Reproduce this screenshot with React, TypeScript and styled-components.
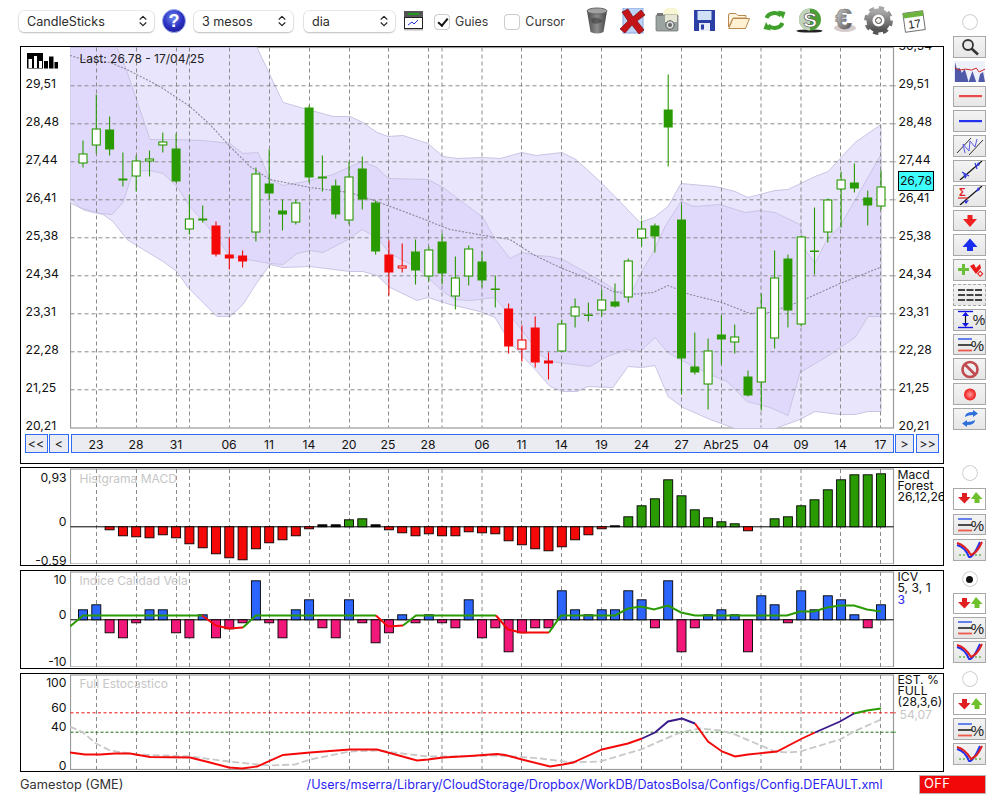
import React from 'react';
import styled, { createGlobalStyle } from 'styled-components';
import { ChevronsUpDown } from 'lucide-react';

const Global = createGlobalStyle`
  html, body { margin: 0; padding: 0; background: #fff; }
  body { font-family: Inter, "Liberation Sans", sans-serif; color: #111; }
`;

const Page = styled.div`
  width: 1000px; height: 800px; overflow: hidden; display: flex; background: #fff;
`;
const Main = styled.div`
  width: 923.5px; margin-left: 20px; display: flex; flex-direction: column;
`;
const Toolbar = styled.div`
  height: 46px; margin-left: -1px; display: flex; align-items: center; padding-bottom: 5px; box-sizing: border-box;
`;
const SelectWrap = styled.div<{ $w: number; $ml: number }>`
  position: relative; width: ${p => p.$w}px; height: 21px; margin-left: ${p => p.$ml}px; flex: none;
`;
const Select = styled.select`
  appearance: none; width: 100%; height: 100%; border: none; border-radius: 5px; background: #fff; padding: 0 0 0 8px;
  box-shadow: 0 0 0 .5px #d4d4d4, 0 1px 1.5px rgba(0,0,0,.3);
  font: 12.6px Inter, "Liberation Sans", sans-serif; color: #2c2c2c; outline: none;
`;
const SelectIcon = styled(ChevronsUpDown)`
  position: absolute; right: 4px; top: 3.5px; width: 14px; height: 14px; color: #222; pointer-events: none;
`;
const ToolIcon = styled.svg<{ $ml: number }>`
  flex: none; display: block; margin-left: ${p => p.$ml}px;
`;
const CheckLabel = styled.label<{ $ml: number; $gap: number }>`
  display: flex; align-items: center; gap: ${p => p.$gap}px; margin-left: ${p => p.$ml}px;
  font-size: 12.4px; color: #3a3a3a; padding-top: 2px;
`;
const Check = styled.input`
  appearance: none; margin: 0; width: 14px; height: 14px; border-radius: 3px; background: #fff; position: relative;
  box-shadow: 0 0 0 .75px #bcbcbc; flex: none;
  &:checked::after {
    content: ''; position: absolute; left: 4.5px; top: 1px; width: 3.5px; height: 8px;
    border: solid #111; border-width: 0 2px 2px 0; transform: rotate(40deg);
  }
`;
const Panel = styled.section<{ $h: number; $mt: number }>`
  position: relative; box-sizing: border-box; height: ${p => p.$h}px; margin-top: ${p => p.$mt}px;
  border: 1.5px solid #000; overflow: hidden; display: flex; flex-direction: column; flex: none;
`;
const ChartRow = styled.div<{ $h: number }>`
  display: grid; grid-template-columns: 48.5px 827px 1fr; height: ${p => p.$h}px; flex: none;
`;
const Axis = styled.div`
  position: relative; font-size: 12.2px; color: #111;
`;
const Tick = styled.span<{ $right?: boolean }>`
  position: absolute; transform: translateY(-50%); line-height: 14px; white-space: nowrap;
  ${p => p.$right ? 'right: 3px;' : 'left: 4.5px;'}
`;
const RightTick = styled.span`
  position: absolute; left: 2px; transform: translateY(-50%); line-height: 14px;
`;
const PriceBox = styled.span`
  position: absolute; left: 1.5px; width: 36px; height: 20px; box-sizing: border-box; border: 1.5px solid #000;
  background: #40ffff; text-align: center; line-height: 18px; transform: translateY(-50%); z-index: 2;
`;
const PlotWrap = styled.div`
  position: relative;
`;
const PlotSvg = styled.svg`
  display: block; position: relative;
`;
const BarsSvg = styled.svg`
  position: absolute; left: 5.5px; top: 5.5px;
`;
const IcoSvg = styled.svg`
  display: block;
`;
const PlotTitle = styled.div<{ $dark?: boolean }>`
  position: absolute; left: 10px; top: ${p => p.$dark ? 3.5 : 2.5}px; font-size: 12px; line-height: 15px; white-space: nowrap;
  color: ${p => p.$dark ? '#222' : '#c6c6c6'};
`;
const Legend = styled.div`
  padding: .5px 0 0 1px; font-size: 12.2px; line-height: 11px; white-space: nowrap; color: #111;
`;
const LegendBlue = styled.div`color: #2a1ef0; padding-top: 1px;`;
const LegendGray = styled.div`color: #c8c8c8; padding-top: 2px; padding-left: 2px;`;
const NavRow = styled.div`
  display: flex; height: 19.5px; margin-top: 4.5px; padding-left: 3.5px; flex: none;
`;
const NavBtn = styled.button<{ $w: number; $ml: number }>`
  width: ${p => p.$w}px; margin-left: ${p => p.$ml}px; padding: 0; flex: none; box-sizing: border-box;
  background: #ebebf2; border: 1px solid #2f6bf5; font: 12.5px Inter, "Liberation Sans", sans-serif; color: #222;
`;
const DateBar = styled.div`
  position: relative; width: 823px; margin-left: 1.5px; box-sizing: border-box; flex: none;
  background: #ebebf2; border: 1px solid #2f6bf5;
`;
const DateLabel = styled.span`
  position: absolute; top: 2px; transform: translateX(-50%); font-size: 12.2px; line-height: 15px; color: #111;
`;
const Status = styled.div`
  flex: 1; display: flex; align-items: center; font-size: 12.8px; padding-bottom: 2px; box-sizing: border-box;
`;
const Stock = styled.span`color: #333;`;
const PathLink = styled.span`
  color: #2a1ef0; margin-left: auto; margin-right: 61px; white-space: nowrap; font-size: 12.63px;
`;
const Side = styled.aside`
  width: 33px; margin-left: 9.5px; display: flex; flex-direction: column; padding-top: 15px; box-sizing: border-box; height: 800px;
`;
const SideGroup = styled.div<{ $mt: number; $gap: number }>`
  display: flex; flex-direction: column; gap: ${p => p.$gap}px; margin-top: ${p => p.$mt}px;
`;
const Radio = styled.div<{ $on?: boolean }>`
  width: 14px; height: 14px; border-radius: 50%; background: #fff; align-self: center; position: relative; margin-bottom: 4px;
  box-shadow: 0 0 0 .75px #c4c4c4, 0 .5px 1px rgba(0,0,0,.15);
  ${p => p.$on ? `&::after { content: ''; position: absolute; left: 3.5px; top: 3.5px; width: 7px; height: 7px; border-radius: 50%; background: #111; }` : ''}
`;
const SideBtn = styled.div<{ $plain?: boolean; $white?: boolean; $dashed?: boolean }>`
  width: 33px; height: 21.8px; box-sizing: border-box; flex: none; display: flex; align-items: center; justify-content: center;
  border: 1.5px ${p => p.$dashed ? 'dashed' : 'solid'} ${p => p.$plain ? 'transparent' : '#a8a8a8'};
  background: ${p => p.$white ? '#fff' : p.$plain ? '#fff' : 'linear-gradient(#f4f4f4, #e6e6e6)'};
`;
const OffBtn = styled.div`
  margin: 10.5px 0 0 -34px; width: 67px; height: 18.5px; box-sizing: border-box; flex: none;
  background: #f20808; border: 1.5px solid #b4b4b4; color: #fff; font-size: 13px; line-height: 15.5px; padding-left: 4px; letter-spacing: .3px;
`;
const SvgNote = styled.text`
  font-family: "Liberation Sans", sans-serif;
`;

const GREEN = '#2a9a02';
const RED = '#f40808';
const xAt = (i: number) => 83 + 13.3 * i;
const pts = (a: number[][]) => a.map(p => p.join(',')).join(' ');

type K = 'w' | 'g' | 'r' | 'R';
const candles: [number, number, number, number, K][] = [
  [141,168,154,164,'w'],[95,154,129,146,'w'],[117,156,130,150,'g'],[153,187,179,181,'g'],[156,192,161,177,'w'],
  [151,177,159,162,'w'],[133,153,142,146,'w'],[134,183,149,182,'g'],[195,235,219,230,'w'],[206,223,219,221,'g'],
  [222,257,226,255,'r'],[238,270,255,259,'r'],[251,268,256,262,'r'],[168,242,174,233,'w'],[150,200,184,194,'g'],
  [200,231,211,215,'g'],[200,225,203,223,'w'],[106,183,108,178,'g'],[156,192,177,179,'g'],[180,219,186,215,'g'],
  [162,225,177,221,'w'],[157,210,169,200,'g'],[201,255,203,252,'g'],[241,296,255,273,'r'],[244,273,266,269,'R'],
  [240,285,252,271,'g'],[247,282,250,277,'w'],[234,285,242,274,'g'],[257,310,278,297,'w'],[246,286,249,277,'w'],
  [252,288,262,281,'g'],[276,308,289,290,'g'],[304,354,309,347,'r'],[326,362,340,350,'R'],[317,368,328,363,'r'],
  [353,380,361,364,'r'],[320,352,324,352,'w'],[299,328,307,317,'w'],[303,322,315,316,'g'],[290,317,300,311,'w'],
  [284,308,302,307,'g'],[259,303,261,298,'w'],[221,247,229,239,'w'],[224,253,226,237,'g'],[75,167,110,128,'g'],
  [205,395,220,359,'g'],[333,375,367,373,'g'],[339,410,351,385,'w'],[316,365,335,340,'g'],[325,354,337,343,'w'],
  [371,397,377,396,'g'],[294,411,308,383,'w'],[251,349,278,339,'w'],[255,328,259,311,'g'],[236,327,237,325,'w'],
  [208,275,251,252,'g'],[199,243,200,233,'w'],[172,228,180,190,'w'],[164,193,183,189,'g'],[191,226,198,206,'g'],
  [171,210,187,207,'w'],
];
const vGrid = [96.5,136.5,176.5,189.5,229.5,269.5,309.5,349.5,388.5,428.5,442,482,521.5,561.5,601.5,641.5,681.5,721.5,761,801,840.5,880.5];
const hGrid = [86.3,124.3,162.3,200.3,238.3,276.3,314.3,352.3,390.3];

const outerTop = [[70,48],[257,48],[283,103],[333,117],[350,117],[363,123],[377,133],[388,137],[403,136],[428,144],[443,157],[457,159],[483,158],[500,159],[522,153],[536,156],[562,153],[576,160],[600,182],[615,197],[640,223],[654,218],[668,207],[681,184],[715,187],[735,192],[748,198],[775,191],[788,190],[815,177],[828,172],[855,143],[881,125]];
const outerBot = [[70,203],[85,211],[103,215],[113,222],[127,240],[163,262],[177,272],[188,288],[217,317],[230,317],[243,305],[257,283],[270,265],[283,268],[310,267],[350,272],[363,272],[377,276],[390,288],[417,301],[428,298],[450,305],[480,312],[495,318],[510,343],[537,372],[550,387],[563,392],[577,392],[588,387],[613,388],[628,367],[642,368],[655,366],[668,397],[683,408],[710,420],[735,429],[775,429],[800,420],[815,412],[840,415],[855,415],[868,412],[881,412]];
const innerTop = [[70,48],[117,48],[127,72],[150,140],[173,140],[203,141],[230,144],[243,154],[258,153],[270,180],[283,186],[305,182],[333,175],[362,162],[377,168],[388,179],[428,180],[443,188],[483,218],[495,240],[510,259],[522,253],[537,256],[550,257],[563,260],[577,268],[590,275],[607,285],[617,292],[633,290],[643,270],[653,253],[665,227],[681,202],[694,207],[720,205],[745,213],[760,211],[775,213],[800,225],[805,250],[815,264],[827,240],[840,227],[881,155]];
const innerBot = [[70,198],[80,208],[100,214],[112,215],[123,203],[133,172],[150,171],[163,174],[177,187],[190,207],[213,233],[230,257],[270,264],[283,265],[297,254],[310,251],[323,253],[348,240],[362,230],[377,238],[390,254],[417,268],[443,292],[455,300],[470,301],[495,298],[520,328],[540,355],[550,362],[590,367],[607,357],[627,350],[640,352],[655,338],[668,353],[680,360],[710,375],[727,382],[747,402],[770,408],[788,416],[800,373],[827,357],[840,348],[855,338],[868,317],[881,317]];
const sma = [[70,56],[83,60],[110,63],[127,70],[160,87],[190,107],[210,125],[230,147],[250,167],[270,180],[310,188],[350,193],[377,202],[417,217],[450,230],[490,237],[510,240],[533,255],[560,268],[590,280],[613,292],[630,295],[653,293],[668,286],[690,295],[722,303],[750,314],[770,313],[800,302],[840,284],[880,268]];

const macd = [0,0,-3,-9,-10,-11,-8,-11,-17,-21,-27,-31,-33,-22,-16,-13,-9,-2,2,2,7,8,2,-3,-6,-9,-7,-9,-9,-5,-6,-7,-14,-18,-22,-24,-20,-13,-8,-2,1,10,21,28,47,31,17,9,5,3,-4,0,8,10,21,27,37,47,52,52,53];
const icv = [10,15,-13,-18,-3,10,10,-13,-18,5,-18,-9,-3,39,-3,-18,10,20,-8,-18,20,-3,-23,-13,5,-3,5,-3,-8,20,-18,-8,-32,-13,-8,-8,29,10,5,10,10,29,20,-8,39,-32,-8,5,10,5,-32,24,15,-3,29,10,24,20,5,-8,15];

const icvLines: [string, number[][]][] = [
  [GREEN, [[70,627],[83,616],[202,616]]],
  [RED, [[202,616],[216,626],[229,629],[243,628]]],
  [GREEN, [[243,628],[256,616],[376,616]]],
  [RED, [[376,616],[388,627],[403,626]]],
  [GREEN, [[403,626],[416,616],[496,616]]],
  [RED, [[496,616],[508,630],[521,633],[549,633]]],
  [GREEN, [[549,633],[561,616],[615,616],[628,609],[641,607],[654,610],[668,606],[681,613],[695,616],[787,616],[800,612],[814,612],[827,608],[840,606],[854,606],[867,610],[881,612]]],
];
const stoLines: [string, number[][]][] = [
  [RED, [[70,753],[85,755],[100,755],[115,754],[130,754],[150,757.5],[190,758],[210,763],[229,768],[242,769],[257,767],[283,755.5],[310,753],[350,750],[377,750],[388,753],[417,761],[428,760],[443,758],[470,756.5],[497,754.5],[505,755.5],[522,760],[550,767],[563,765],[573,763],[602,750],[628,744],[642,739]]],
  ['#3a1a8a', [[642,739],[655,733],[668,722],[682,719],[695,724]]],
  [RED, [[695,724],[708,742],[722,752],[735,757],[748,755],[777,752],[802,739],[815,733]]],
  ['#3a1a8a', [[815,733],[840,722],[854,714]]],
  [GREEN, [[854,714],[867,711],[881,709]]],
];
const stoGray = [[70,727],[83,733],[96,744],[110,751],[136,755],[190,757],[229,762],[257,765],[270,766],[295,765],[310,760],[350,752],[377,751],[428,757],[443,757],[500,756],[541,759],[572,763],[600,762],[641,750],[680,733],[700,729],[720,731],[735,735],[775,752],[788,753],[800,752],[840,740],[854,732],[881,720]];

const GRID = '#8a8a8a';

const Plot: React.FC<{ y0: number; h: number; top: number; bottom: number; children?: React.ReactNode }> = ({ y0, h, top, bottom, children }) => (
  <PlotSvg width={827} height={h} viewBox={`70 ${y0} 827 ${h}`}>
    <rect x={70.5} y={top} width={823} height={bottom - top} fill="#fff" stroke="#9a9a9a" strokeWidth={1.2} />
    {vGrid.map(x => <line key={x} x1={x} x2={x} y1={top} y2={bottom} stroke={GRID} strokeDasharray="4 3" strokeWidth={1} />)}
    {children}
  </PlotSvg>
);

const Candle: React.FC<{ i: number; c: [number, number, number, number, K] }> = ({ i, c }) => {
  const [wt, wb, bt, bb, k] = c;
  const x = xAt(i);
  const col = k === 'r' || k === 'R' ? RED : GREEN;
  const fill = k === 'w' || k === 'R' ? '#fff' : col;
  return (
    <g>
      <line x1={x} x2={x} y1={wt} y2={wb} stroke={col} strokeWidth={1.1} />
      {k === 'w' || k === 'R'
        ? <rect x={x - 4} y={bt + .5} width={8} height={Math.max(bb - bt - 1, 1)} fill={fill} stroke={col} strokeWidth={1.1} />
        : <rect x={x - 4.5} y={bt} width={9} height={Math.max(bb - bt, 1.5)} fill={fill} />}
    </g>
  );
};

const MainPlot = () => (
  <PlotSvg width={827} height={382} viewBox="70 47.5 827 382">
    <rect x={70.5} y={48} width={823} height={380.5} fill="#fff" stroke="#9a9a9a" strokeWidth={1.2} />
    <polygon points={pts([...outerTop, ...[...outerBot].reverse()])} fill="#e9e5fc" stroke="#c9c5e4" strokeWidth={1} />
    <polygon points={pts([...innerTop, ...[...innerBot].reverse()])} fill="#e1d9fb" stroke="#c9c5e4" strokeWidth={1} />
    {hGrid.map(y => <line key={y} x1={70.5} x2={893.5} y1={y} y2={y} stroke={GRID} strokeDasharray="4 3" strokeWidth={1} />)}
    {vGrid.map(x => <line key={x} x1={x} x2={x} y1={48} y2={428} stroke={GRID} strokeDasharray="4 3" strokeWidth={1} />)}
    <polyline points={pts(sma)} fill="none" stroke="#8a8598" strokeWidth={1.1} strokeDasharray="2 1.5" />
    {candles.map((c, i) => <Candle key={i} i={i} c={c} />)}
    {hGrid.map(y => <line key={y} x1={893.5} x2={896} y1={y} y2={y} stroke="#999" strokeWidth={.8} />)}
  </PlotSvg>
);

const BarsIcon = () => (
  <BarsSvg width={32} height={16} viewBox="0 0 32 16">
    <rect x={0} y={0} width={16} height={15.5} fill="#000" />
    <rect x={1.5} y={6} width={3.5} height={9} fill="#fff" />
    <rect x={7} y={3} width={3} height={12} fill="#fff" />
    <rect x={12} y={8} width={3} height={7} fill="#fff" />
    <rect x={17} y={8} width={4} height={7.5} fill="#000" />
    <rect x={22} y={3.5} width={4.5} height={12} fill="#000" />
    <rect x={27.5} y={9} width={3.5} height={6.5} fill="#000" />
  </BarsSvg>
);

const HelpIcon = () => (
  <ToolIcon $ml={8} width={24} height={24} viewBox="0 0 24 24">
    <defs><radialGradient id="hg" cx=".45" cy=".35" r=".7"><stop offset="0" stopColor="#6f8df0" /><stop offset=".6" stopColor="#2a2fc0" /><stop offset="1" stopColor="#1a1a90" /></radialGradient></defs>
    <circle cx={12} cy={12} r={11.5} fill="url(#hg)" stroke="#9fb0ef" strokeWidth={1} />
    <SvgNote x={12} y={18} textAnchor="middle" fontSize={18} fontWeight={700} fill="#fff">?</SvgNote>
  </ToolIcon>
);
const WindowIcon = () => (
  <ToolIcon $ml={9} width={19} height={20} viewBox="0 0 19 20">
    <rect x={0} y={0} width={19} height={6} fill="#555" />
    <rect x={4} y={2} width={11} height={2} fill="#1f9a1f" />
    <rect x={.5} y={6.5} width={18} height={11} fill="#fff" stroke="#222" />
    <polyline points="4,14 8,11 10,13 14,9" fill="none" stroke="#2233dd" strokeWidth={1} />
    <rect x={0} y={18} width={19} height={1.5} fill="#bbb" />
  </ToolIcon>
);
const TrashIcon = () => (
  <ToolIcon $ml={21} width={22} height={27} viewBox="0 0 22 27">
    <defs><linearGradient id="tg" x1="0" x2="1"><stop offset="0" stopColor="#4a4a4a" /><stop offset=".5" stopColor="#8c8c8c" /><stop offset="1" stopColor="#444" /></linearGradient></defs>
    <path d="M1 4 L4.5 25 Q11 28 17.5 25 L21 4 Z" fill="url(#tg)" />
    <path d="M5 12 Q11 8 17 14 Q12 18 6 16 Z" fill="#333" opacity={.5} />
    <ellipse cx={11} cy={4} rx={10} ry={3} fill="#a2a2a2" stroke="#666" />
  </ToolIcon>
);
const CrossIcon = () => (
  <ToolIcon $ml={12} width={26} height={26} viewBox="0 0 26 26">
    <rect x={3} y={0} width={20} height={25} fill="#bdd3f6" stroke="#8aa6dc" />
    <path d="M2 4 L8 1 L13 9 L21 2 L25 7 L17 13 L24 22 L19 26 L12 17 L5 25 L0 21 L8 13 Z" fill="#c4141a" stroke="#7a0b0e" strokeWidth={.7} />
  </ToolIcon>
);
const CameraIcon = () => (
  <ToolIcon $ml={9} width={25} height={25} viewBox="0 0 25 25">
    <circle cx={16} cy={7} r={8} fill="#f6f3c4" opacity={.75} />
    <rect x={1} y={7} width={22} height={16} rx={1} fill="#9aa3a0" stroke="#6a6a6a" strokeWidth={.7} />
    <rect x={2} y={5} width={6} height={3} fill="#777" />
    <rect x={10} y={7} width={12} height={7} fill="#eef0da" opacity={.9} />
    <circle cx={15} cy={17} r={4.2} fill="#d9dcdc" stroke="#555" />
    <circle cx={15} cy={17} r={2} fill="#666" />
  </ToolIcon>
);
const FloppyIcon = () => (
  <ToolIcon $ml={14} width={21} height={21} viewBox="0 0 21 21">
    <rect x={0} y={0} width={21} height={21} fill="#2b3fa6" />
    <rect x={3.5} y={1} width={14} height={9} fill="#cfe0f7" />
    <rect x={5} y={13} width={11} height={8} fill="#e7ecf8" />
    <rect x={7} y={14.5} width={3} height={5} fill="#2b3fa6" />
  </ToolIcon>
);
const FolderIcon = () => (
  <ToolIcon $ml={13} width={22} height={16} viewBox="0 0 22 16">
    <path d="M.5 2 Q.5 .5 2 .5 H8 L10 2.5 H18 V5 H5 L.5 14 Z" fill="#fff5de" stroke="#b98a50" />
    <path d="M.8 15.5 L5 5.5 H21.5 L17.5 15.5 Z" fill="#fff1d2" stroke="#b98a50" />
  </ToolIcon>
);
const RefreshIcon = () => (
  <ToolIcon $ml={13} width={23} height={23} viewBox="0 0 23 23">
    <path d="M3.5 9 A8.5 7 0 0 1 18 6.5" fill="none" stroke="#3fa02c" strokeWidth={4} />
    <path d="M15 1.5 L22.5 3 L20 10 Z" fill="#3fa02c" />
    <path d="M19.5 14 A8.5 7 0 0 1 5 16.5" fill="none" stroke="#3fa02c" strokeWidth={4} />
    <path d="M8 21.5 L.5 20 L3 13 Z" fill="#3fa02c" />
  </ToolIcon>
);
const CoinIcon = () => (
  <ToolIcon $ml={10} width={27} height={25} viewBox="0 0 27 25">
    <ellipse cx={13.5} cy={23} rx={13} ry={1.6} fill="#222" />
    <circle cx={14} cy={11.5} r={11} fill="#4c9f38" />
    <path d="M14 .5 A11 11 0 0 0 14 22.5 Z" fill="#d7dcd2" opacity={.85} />
    <SvgNote x={14} y={19} textAnchor="middle" fontSize={21} fontWeight={700} fill="#fff" stroke="#444" strokeWidth={.6}>S</SvgNote>
  </ToolIcon>
);
const EuroIcon = () => (
  <ToolIcon $ml={8} width={26} height={25} viewBox="0 0 26 25">
    <defs><linearGradient id="eg" x1="0" y1="0" x2="1" y2="1"><stop offset="0" stopColor="#e0e0e0" /><stop offset=".55" stopColor="#8a8a8a" /><stop offset="1" stopColor="#4a3f3a" /></linearGradient></defs>
    <ellipse cx={14} cy={20} rx={11} ry={4} fill="#b5aaa8" opacity={.6} />
    <SvgNote x={12.5} y={20.5} textAnchor="middle" fontSize={30} fontWeight={700} fill="url(#eg)" stroke="#666" strokeWidth={.5}>€</SvgNote>
  </ToolIcon>
);
const GearIcon = () => (
  <ToolIcon $ml={7} width={29} height={29} viewBox="0 0 29 29">
    <defs><linearGradient id="gg" x1="0" y1="0" x2="0" y2="1"><stop offset="0" stopColor="#a8a8a8" /><stop offset="1" stopColor="#555" /></linearGradient></defs>
    <circle cx={14.5} cy={14.5} r={12.4} fill="none" stroke="url(#gg)" strokeWidth={4} strokeDasharray="5.2 4.53" />
    <circle cx={14.5} cy={14.5} r={9} fill="none" stroke="url(#gg)" strokeWidth={6} />
    <circle cx={14.5} cy={14.5} r={3} fill="#f1efe8" stroke="#444" />
  </ToolIcon>
);
const CalendarIcon = () => (
  <ToolIcon $ml={9} width={24} height={24} viewBox="0 0 24 24">
    <g transform="rotate(-8 12 12)">
      <rect x={2} y={3} width={20} height={19} fill="#fff" stroke="#555" strokeWidth={.8} />
      <rect x={2} y={3} width={20} height={5} fill="#6db33f" />
      <SvgNote x={12} y={19} textAnchor="middle" fontSize={11.5} fill="#222">17</SvgNote>
    </g>
  </ToolIcon>
);

const Ico: React.FC<{ children: React.ReactNode; w?: number; h?: number }> = ({ children, w = 30, h = 19 }) => (
  <IcoSvg width={w} height={h} viewBox="0 0 30 19">{children}</IcoSvg>
);
const downUp = (
  <Ico>
    <path d="M3 8 H7 V4 H12 V8 H15.5 L9.5 14.5 Z" fill="#e02020" />
    <path d="M21 3 L27.5 10 H24.5 V14 H19.5 V10 H16 Z" fill="#6ec02c" />
  </Ico>
);
const linesPct = (
  <Ico>
    <line x1={3} x2={17} y1={4} y2={4} stroke="#2a50e8" strokeWidth={1.4} />
    <line x1={3} x2={17} y1={10} y2={10} stroke="#222" strokeWidth={1.6} />
    <line x1={3} x2={17} y1={15.5} y2={15.5} stroke="#ee5a4a" strokeWidth={1.8} />
    <SvgNote x={22.5} y={16} textAnchor="middle" fontSize={15} fill="#222">%</SvgNote>
  </Ico>
);
const vee = (
  <Ico>
    <line x1={4} x2={28} y1={14} y2={14} stroke="#2a9a02" strokeWidth={1} strokeDasharray="2 2" />
    <path d="M2 4 Q10 6 14 16 Q18 17 25 1" fill="none" stroke="#2233ee" strokeWidth={2} />
    <path d="M2 2 Q10 4 16 14 Q22 12 27 1" fill="none" stroke="#e02020" strokeWidth={2} />
  </Ico>
);

const sideTop: React.ReactNode[] = [
  <Ico key="s"><circle cx={13} cy={8} r={5} fill="#e8e8e8" stroke="#333" strokeWidth={1.8} /><line x1={16.5} y1={11.5} x2={23} y2={17.5} stroke="#333" strokeWidth={2.6} /></Ico>,
  <IcoSvg key="c" width={32} height={21.5} viewBox="0 0 32 21.5"><rect width={32} height={21.5} fill="#eef0fa" /><path d="M1 21.5 V1 L3 8 L6 7 L8 12 L11 8 L13 14 L15 21.5 Z M15 21.5 L19 10 L23 21.5 Z M25 21.5 L27 13 L30 11 L32 21.5 Z" fill="#4f5aa8" /><polyline points="1,7 6,9 12,8 18,9 23,7 26,11 32,8" fill="none" stroke="#d02020" strokeWidth={1} /></IcoSvg>,
  <Ico key="r"><rect x={4} y={8} width={23} height={2.2} fill="#ea4a4a" /></Ico>,
  <Ico key="b"><rect x={4} y={8} width={23} height={2.2} fill="#2433ee" /></Ico>,
  <Ico key="ch"><line x1={2} y1={16} x2={16} y2={1} stroke="#333" strokeWidth={1} /><line x1={14} y1={18} x2={28} y2={3} stroke="#333" strokeWidth={1} /><polyline points="10,16 8,7 14,14 15,4 20,10 22,2" fill="none" stroke="#5a5ae8" strokeWidth={1} /></Ico>,
  <Ico key="f"><line x1={5} y1={19} x2={27} y2={0} stroke="#111" strokeWidth={1.2} /><path d="M8 12 L12 15 L10 18 Z M21 6 L25 4 L23 1 Z" fill="#2f3ae0" /><line x1={7} y1={11} x2={14} y2={15} stroke="#2f3ae0" strokeWidth={1.2} /><line x1={20} y1={2} x2={22} y2={8} stroke="#2f3ae0" strokeWidth={1.2} /></Ico>,
  <Ico key="sg"><line x1={5} y1={19} x2={27} y2={0} stroke="#111" strokeWidth={1.2} /><SvgNote x={4} y={10} fontSize={11} fontWeight={700} fill="#e02020">Σ</SvgNote><path d="M9 15 L14 14 L11 18 Z M21 6 L25 4 L23 1 Z" fill="#2f3ae0" /><line x1={3} y1={12} x2={13} y2={12} stroke="#e02020" strokeWidth={1.2} /></Ico>,
  <Ico key="dn"><path d="M8 8 H12.5 V4 H17.5 V8 H22 L15 16 Z" fill="#f02020" /></Ico>,
  <Ico key="up"><path d="M15 2.5 L22.5 11 H18 V15 H12 V11 H7.5 Z" fill="#1a2ef0" /></Ico>,
  <Ico key="gr"><path d="M7 3 H10 V7 H14 V10 H10 V14 H7 V10 H3 V7 H7 Z" fill="#6bbf3a" /><path d="M15 5 L19 3 L21 7 L25 3 L26 7 L21 13 Z" fill="#e81818" /><rect x={23.5} y={11} width={3.5} height={3.5} fill="none" stroke="#e81818" transform="rotate(45 25.2 12.7)" /></Ico>,
  <Ico key="l"><rect x={3} y={4} width={7} height={2} fill="#444" /><rect x={11.5} y={4} width={7} height={2} fill="#444" /><rect x={20} y={4} width={7} height={2} fill="#444" /><rect x={3} y={9} width={7} height={2} fill="#444" /><rect x={11.5} y={9} width={7} height={2} fill="#444" /><rect x={20} y={9} width={7} height={2} fill="#444" /><rect x={3} y={14} width={7} height={2} fill="#444" /><rect x={11.5} y={14} width={7} height={2} fill="#444" /><rect x={20} y={14} width={7} height={2} fill="#444" /></Ico>,
  <Ico key="ip"><line x1={3} x2={18} y1={1.5} y2={1.5} stroke="#1414e8" strokeWidth={1.4} /><line x1={3} x2={18} y1={17.5} y2={17.5} stroke="#1414e8" strokeWidth={1.4} /><line x1={10.5} x2={10.5} y1={3} y2={16} stroke="#111" strokeWidth={1.2} /><path d="M7 6 L10.5 2 L14 6 Z M7 13 L10.5 17 L14 13 Z" fill="#1414e8" /><SvgNote x={24} y={15} textAnchor="middle" fontSize={14} fill="#222">%</SvgNote></Ico>,
  <React.Fragment key="lp">{linesPct}</React.Fragment>,
  <Ico key="no"><circle cx={15} cy={9.5} r={7.5} fill="none" stroke="#c04a50" strokeWidth={2.6} /><line x1={10} y1={4.5} x2={20} y2={14.5} stroke="#c04a50" strokeWidth={2.6} /></Ico>,
  <Ico key="re"><defs><radialGradient id="rc"><stop offset="0" stopColor="#ff9a9a" /><stop offset="1" stopColor="#f01818" /></radialGradient></defs><circle cx={15} cy={9.5} r={6} fill="url(#rc)" /></Ico>,
  <Ico key="sy"><path d="M10 8 Q10 3 18 3 V1 L23 4.5 L18 8 V6 Q13 6 10 8 Z M20 11 Q20 16 12 16 V18 L7 14.5 L12 11 V13 Q17 13 20 11 Z" fill="#2f6fdc" /></Ico>,
];

const dates: [string, number][] = [['23',96],['28',136],['31',176],['06',229],['11',269],['14',309],['20',349],['25',388],['28',428],['06',482],['11',521.5],['14',561.5],['19',601.5],['24',641.5],['27',681.5],['Abr25',721],['04',761],['09',801],['14',840.5],['17',880.5]];
const leftLabels = ['29,51','28,48','27,44','26,41','25,38','24,34','23,31','22,28','21,25','20,21'];
const rightLabels = ['30,54', ...leftLabels];

const Ticks: React.FC<{ y0: number; items: [string, number][] }> = ({ y0, items }) => (
  <Axis>{items.map(([t, y]) => <Tick key={t} $right style={{ top: y - y0 }}>{t}</Tick>)}</Axis>
);

const SubButtons: React.FC<{ mt: number; gap: number; on?: boolean }> = ({ mt, gap, on }) => (
  <SideGroup $mt={mt} $gap={gap}>
    <Radio $on={on} />
    <SideBtn $white>{downUp}</SideBtn>
    <SideBtn>{linesPct}</SideBtn>
    <SideBtn>{vee}</SideBtn>
  </SideGroup>
);

export default function App() {
  return (
    <Page>
      <Global />
      <Main>
        <Toolbar>
          <SelectWrap $w={135} $ml={0}><Select defaultValue="CandleSticks"><option>CandleSticks</option></Select><SelectIcon /></SelectWrap>
          <HelpIcon />
          <SelectWrap $w={99} $ml={8}><Select defaultValue="3 mesos"><option>3 mesos</option></Select><SelectIcon /></SelectWrap>
          <SelectWrap $w={91} $ml={11}><Select defaultValue="dia"><option>dia</option></Select><SelectIcon /></SelectWrap>
          <WindowIcon />
          <CheckLabel $ml={12} $gap={6}><Check type="checkbox" defaultChecked />Guies</CheckLabel>
          <CheckLabel $ml={17} $gap={6}><Check type="checkbox" />Cursor</CheckLabel>
          <TrashIcon /><CrossIcon /><CameraIcon /><FloppyIcon /><FolderIcon /><RefreshIcon /><CoinIcon /><EuroIcon /><GearIcon /><CalendarIcon />
        </Toolbar>

        <Panel $h={417.5} $mt={0}>
          <ChartRow $h={382}>
            <Axis>
              <BarsIcon />
              {leftLabels.map((t, i) => <Tick key={t} style={{ top: 84 - 47.5 + 38 * i }}>{t}</Tick>)}
            </Axis>
            <PlotWrap>
              <MainPlot />
              <PlotTitle $dark>Last: 26.78 - 17/04/25</PlotTitle>
            </PlotWrap>
            <Axis>
              {rightLabels.map((t, i) => <RightTick key={t} style={{ top: 46 - 47.5 + 38 * i }}>{t}</RightTick>)}
              <PriceBox style={{ top: 181 - 47.5 }}>26,78</PriceBox>
            </Axis>
          </ChartRow>
          <NavRow>
            <NavBtn $w={23} $ml={0}>&lt;&lt;</NavBtn>
            <NavBtn $w={20} $ml={1.5}>&lt;</NavBtn>
            <DateBar>{dates.map(([t, x]) => <DateLabel key={t + x} style={{ left: x - 71.5 }}>{t}</DateLabel>)}</DateBar>
            <NavBtn $w={19} $ml={1.5}>&gt;</NavBtn>
            <NavBtn $w={23} $ml={2}>&gt;&gt;</NavBtn>
          </NavRow>
        </Panel>

        <Panel $h={99} $mt={3.5}>
          <ChartRow $h={96}>
            <Ticks y0={468.5} items={[['0,93', 478], ['0', 522], ['-0,59', 561]]} />
            <PlotWrap>
              <Plot y0={468.5} h={96} top={469.5} bottom={564.5}>
                <line x1={70.5} x2={893.5} y1={527.3} y2={527.3} stroke="#000" strokeWidth={1} />
                {macd.map((v, i) => v === 0 ? null : (
                  <rect key={i} x={xAt(i) - 4.5} width={9} y={v > 0 ? 527.3 - v : 527.3} height={Math.abs(v)}
                    fill={v > 2 ? GREEN : v > 0 ? '#000' : RED} stroke="#000" strokeWidth={.9} />
                ))}
              </Plot>
              <PlotTitle>Histgrama MACD</PlotTitle>
            </PlotWrap>
            <Legend>Macd<br />Forest<br />26,12,26</Legend>
          </ChartRow>
        </Panel>

        <Panel $h={99.5} $mt={3.5}>
          <ChartRow $h={96.5}>
            <Ticks y0={571.5} items={[['10', 580.5], ['0', 616], ['-10', 663]]} />
            <PlotWrap>
              <Plot y0={571.5} h={96.5} top={572.5} bottom={667.5}>
                <line x1={70.5} x2={893.5} y1={620.3} y2={620.3} stroke="#000" strokeWidth={1} />
                {icv.map((v, i) => (
                  <rect key={i} x={xAt(i) - 4.5} width={9} y={v > 0 ? 620.3 - v : 620.3} height={Math.abs(v)}
                    fill={v > 0 ? '#2b65fb' : '#f2187a'} stroke="#000" strokeWidth={.9} />
                ))}
                {icvLines.map(([c, p], i) => <polyline key={i} points={pts(p)} fill="none" stroke={c} strokeWidth={2} />)}
              </Plot>
              <PlotTitle>Indice Calidad Vela</PlotTitle>
            </PlotWrap>
            <Legend>ICV<br />5, 3, 1<LegendBlue>3</LegendBlue></Legend>
          </ChartRow>
        </Panel>

        <Panel $h={99} $mt={3.5}>
          <ChartRow $h={96}>
            <Ticks y0={674.5} items={[['100', 684], ['60', 709], ['40', 727.5], ['0', 767]]} />
            <PlotWrap>
              <Plot y0={674.5} h={96} top={675.5} bottom={770}>
                <line x1={70.5} x2={893.5} y1={713.3} y2={713.3} stroke="#f01010" strokeWidth={1} strokeDasharray="3 2.5" />
                <line x1={70.5} x2={893.5} y1={732.7} y2={732.7} stroke="#1c6a12" strokeWidth={1} strokeDasharray="3 2" />
                <polyline points={pts(stoGray)} fill="none" stroke="#c8c8c8" strokeWidth={1.8} strokeDasharray="7 3" />
                {stoLines.map(([c, p], i) => <polyline key={i} points={pts(p)} fill="none" stroke={c} strokeWidth={1.9} />)}
                <line x1={893.5} x2={896} y1={713.3} y2={713.3} stroke="#e02020" strokeWidth={.8} />
                <line x1={893.5} x2={896} y1={732.7} y2={732.7} stroke="#1c8a12" strokeWidth={.8} />
              </Plot>
              <PlotTitle>Full Estocastico</PlotTitle>
            </PlotWrap>
            <Legend>EST. %<br />FULL<br />(28,3,6)<LegendGray>54,07</LegendGray></Legend>
          </ChartRow>
        </Panel>

        <Status>
          <Stock>Gamestop (GME)</Stock>
          <PathLink>/Users/mserra/Library/CloudStorage/Dropbox/WorkDB/DatosBolsa/Configs/Config.DEFAULT.xml</PathLink>
        </Status>
      </Main>

      <Side>
        <SideGroup $mt={0} $gap={3}>
          <Radio />
          {sideTop.map((n, i) => <SideBtn key={i} $plain={i === 1} $dashed={i === 10}>{n}</SideBtn>)}
        </SideGroup>
        <SubButtons mt={36} gap={4} />
        <SubButtons mt={11} gap={2.5} on />
        <SubButtons mt={9} gap={3.2} />
        <OffBtn>OFF</OffBtn>
      </Side>
    </Page>
  );
}
